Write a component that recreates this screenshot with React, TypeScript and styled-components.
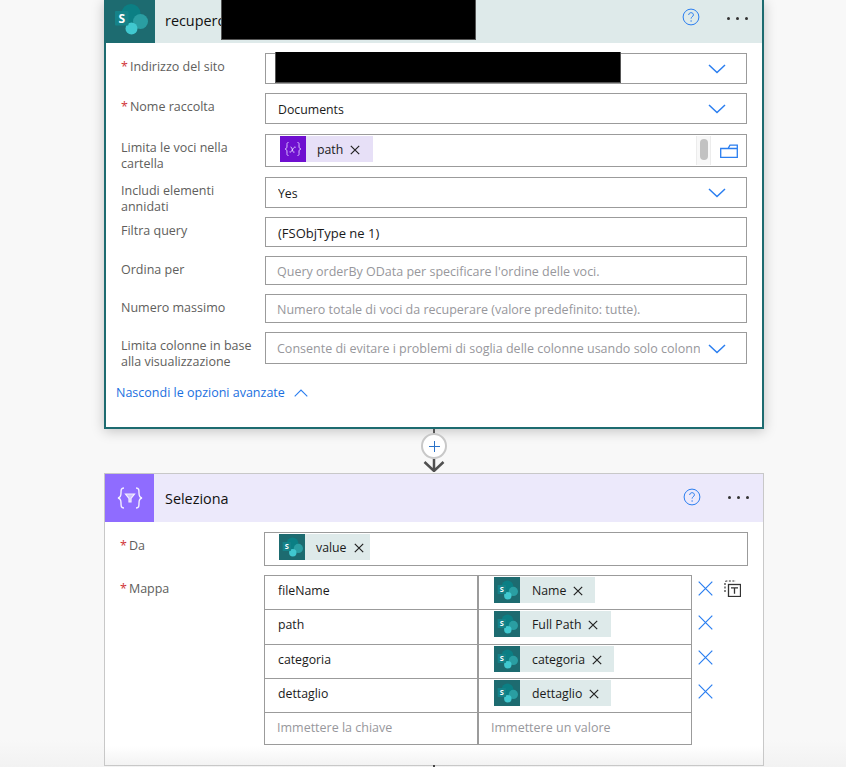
import React from "react";
import styled, { createGlobalStyle } from "styled-components";

const Global = createGlobalStyle`
  html, body { margin: 0; padding: 0; height: 100%; overflow: hidden; background: #f8f8f8; }
  #root { height: 767px; overflow: hidden; }
`;

const Page = styled.div`
  position: relative;
  width: 846px;
  height: 767px;
  overflow: hidden;
  padding-left: 104px;
  box-sizing: border-box;
  font-family: "Open Sans", "Noto Sans", sans-serif;
  font-size: 12px;
  color: #111;
  background: linear-gradient(#f8f8f8 0, #f8f8f8 740px, #f2f2f2 767px);
`;

const Card = styled.section<{ $selected?: boolean }>`
  width: 660px;
  box-sizing: border-box;
  background: #fff;
  border: ${p => (p.$selected ? "2px solid #1d6b70" : "1px solid #c8c8c8")};
  border-top: ${p => (p.$selected ? "none" : "1px solid #c8c8c8")};
  box-shadow: ${p => (p.$selected ? "0 2px 12px rgba(0,0,0,.22)" : "none")};
`;

const Header = styled.header<{ $bg: string; $h: number }>`
  display: flex;
  align-items: center;
  height: ${p => p.$h}px;
  background: ${p => p.$bg};
`;

const LogoBox = styled.div<{ $bg: string; $w: number; $lift?: number }>`
  width: ${p => p.$w}px;
  align-self: stretch;
  background: ${p => p.$bg};
  display: flex;
  align-items: center;
  justify-content: center;
  flex: none;
  box-sizing: border-box;
  padding-bottom: ${p => p.$lift ?? 0}px;
`;

const Title = styled.div<{ $left: number; $lift?: number }>`
  margin-left: ${p => p.$left}px;
  margin-bottom: ${p => p.$lift ?? 0}px;
  font-size: 14.4px;
  color: #111;
  flex: 1;
`;

const HelpIcon = styled.svg<{ $right: number; $lift: number }>`
  width: 18px;
  height: 18px;
  margin-right: ${p => p.$right}px;
  margin-bottom: ${p => p.$lift}px;
  flex: none;
`;

const Dots = styled.div<{ $right: number; $lift: number }>`
  display: flex;
  gap: 6px;
  margin-right: ${p => p.$right}px;
  margin-bottom: ${p => p.$lift}px;
`;

const Dot = styled.i`
  width: 3px;
  height: 3px;
  border-radius: 50%;
  background: #333;
`;

const Form = styled.div<{ $top: number; $bottom: number }>`
  display: flex;
  flex-direction: column;
  padding: ${p => p.$top}px 15px ${p => p.$bottom}px 15px;
`;

const FadingForm = styled(Form)`
  background: linear-gradient(#fff 0, #fff 224px, #f3f3f3 243px);
`;

const Row = styled.div<{ $gap: number }>`
  display: grid;
  grid-template-columns: 144px 1fr;
  margin-bottom: ${p => p.$gap}px;
`;

const Label = styled.label`
  padding-top: 6px;
  padding-right: 10px;
  font-size: 12.5px;
  line-height: 16px;
  color: #605e5c;
`;

const Req = styled.span`
  color: #d13438;
  margin-right: 2px;
`;

const Input = styled.div<{ $h: number; $pad?: number; $chip?: boolean }>`
  height: ${p => p.$h}px;
  box-sizing: border-box;
  border: 1px solid #9b9b9b;
  display: flex;
  align-items: center;
  padding-left: ${p => p.$pad ?? 12}px;
  padding-top: ${p => (p.$chip ? 0 : 1)}px;
  background: #fff;
  font-size: 12.3px;
  color: #1a1a1a;
  white-space: nowrap;
  overflow: hidden;
`;

const Value = styled.span<{ $size?: number }>`
  flex: 1;
  min-width: 0;
  overflow: hidden;
  font-size: ${p => p.$size ?? 12.3}px;
`;

const Placeholder = styled.span`
  flex: 1;
  min-width: 0;
  margin-left: -1px;
  overflow: hidden;
  font-size: 12.5px;
  color: #97979c;
`;

const Chevron = styled.svg`
  width: 18px;
  height: 10px;
  margin-right: 20px;
  margin-left: 8px;
  flex: none;
`;

const Chip = styled.span<{ $bg: string; $w: number }>`
  display: inline-flex;
  align-items: center;
  align-self: flex-start;
  margin-top: 1px;
  height: 26px;
  width: ${p => p.$w}px;
  flex: none;
  background: ${p => p.$bg};
  font-size: 12.3px;
  color: #1a1a1a;
`;

const ChipIcon = styled.span<{ $bg: string }>`
  width: 26px;
  height: 26px;
  background: ${p => p.$bg};
  display: flex;
  align-items: center;
  justify-content: center;
  flex: none;
`;

const ChipText = styled.span<{ $left: number }>`
  margin-left: ${p => p.$left}px;
`;

const ChipX = styled.svg`
  width: 10px;
  height: 10px;
  margin-left: 7px;
  margin-top: 2px;
  flex: none;
`;

const Spacer = styled.div`
  flex: 1;
`;

const ScrollTrack = styled.div`
  width: 15px;
  align-self: stretch;
  margin: 1px 0;
  border-left: 1px solid #ececec;
  border-right: 1px solid #ececec;
  background: #f8f8f8;
  display: flex;
  justify-content: center;
  padding-top: 3px;
  box-sizing: border-box;
  flex: none;
`;

const ScrollThumb = styled.div`
  width: 8px;
  height: 21px;
  border-radius: 4px;
  background: #c2c2c2;
`;

const FolderIcon = styled.svg`
  width: 18px;
  height: 14px;
  margin: 0 8px 0 9px;
  flex: none;
`;

const AdvLink = styled.a`
  display: flex;
  align-items: center;
  gap: 9px;
  margin: 15px 0 0 -5px;
  font-size: 12.5px;
  line-height: 16px;
  color: #1a6fe0;
`;

const Connector = styled.div`
  width: 660px;
  height: 44px;
  position: relative;
  display: flex;
  flex-direction: column;
  align-items: center;
`;

const Stem = styled.div`
  width: 2px;
  height: 5px;
  background: #555;
`;

const PlusCircle = styled.div`
  width: 26px;
  height: 26px;
  box-sizing: border-box;
  border: 2px solid #c8c8c8;
  border-radius: 50%;
  background: #fff;
  display: flex;
  align-items: center;
  justify-content: center;
  flex: none;
  margin-top: -1px;
`;

const ArrowIcon = styled.svg`
  width: 22px;
  height: 13px;
  flex: none;
`;

const MapWrap = styled.div`
  display: flex;
  align-items: flex-start;
`;

const MapTable = styled.div`
  width: 428px;
  border: 1px solid #9b9b9b;
  box-sizing: border-box;
  flex: none;
  background: #fff;
`;

const MapRow = styled.div<{ $h: number; $last?: boolean }>`
  display: grid;
  grid-template-columns: 214px 1fr;
  height: ${p => p.$h}px;
  box-sizing: border-box;
  border-bottom: ${p => (p.$last ? "none" : "1px solid #9b9b9b")};
`;

const KeyCell = styled.div<{ $ph?: boolean }>`
  display: flex;
  align-items: center;
  padding-left: ${p => (p.$ph ? 12 : 13)}px;
  padding-bottom: ${p => (p.$ph ? 3 : 5)}px;
  border-right: 2px solid #9b9b9b;
  font-size: ${p => (p.$ph ? 12.5 : 12.3)}px;
  color: ${p => (p.$ph ? "#97979c" : "#1a1a1a")};
`;

const ValCell = styled.div<{ $ph?: boolean }>`
  display: flex;
  align-items: center;
  padding-left: ${p => (p.$ph ? 12 : 15)}px;
  padding-bottom: ${p => (p.$ph ? 3 : 0)}px;
  font-size: 12.5px;
  color: #97979c;
`;

const SideIcons = styled.div`
  display: flex;
  flex-direction: column;
  margin-left: 6px;
  width: 50px;
`;

const SideRow = styled.div<{ $h: number }>`
  height: ${p => p.$h}px;
  display: flex;
  align-items: flex-start;
  padding-top: 6px;
  box-sizing: border-box;
  gap: 12px;
`;

const TextModeIcon = styled.svg`
  width: 17px;
  height: 17px;
  margin-top: -1px;
  margin-left: -1px;
  flex: none;
`;

const Redaction = styled.div<{ $x: number; $y: number; $w: number; $h: number }>`
  position: absolute;
  left: ${p => p.$x}px;
  top: ${p => p.$y}px;
  width: ${p => p.$w}px;
  height: ${p => p.$h}px;
  background: #000;
  border: 1px solid #555;
  border-width: 0 1px 1px 1px;
  box-sizing: border-box;
`;

const BottomTick = styled.div`
  position: absolute;
  left: 433px;
  top: 765px;
  width: 2px;
  height: 2px;
  background: #444;
`;

const BLUE = "#2a7ef0";
const TEAL = "#1d6b70";
const TEAL_BG = "#deeaea";
const PURPLE_BG = "#ece9fb";
const PURPLE = "#8f6cff";
const VAR_BG = "#e7e0f7";
const VAR_PURPLE = "#6f0fd0";

const SharePoint: React.FC<{ size: number }> = ({ size }) => (
  <svg width={size} height={(size * 32) / 34} viewBox="0 0 34 32">
    <circle cx="17" cy="10.5" r="9.5" fill="#0b7f84" />
    <circle cx="26.500" cy="18.500" r="7.500" fill="#2a9ea2" />
    <circle cx="17.500" cy="25.500" r="6" fill="#40c8cf" />
    <rect x="1" y="8" width="13.500" height="14.500" rx="1" fill="#158389" />
    <text x="7.700" y="19.800" textAnchor="middle" fontFamily="Open Sans, sans-serif" fontWeight="700" fontSize="12" fill="#fff">S</text>
  </svg>
);

const Help = ({ right, lift }: { right: number; lift: number }) => (
  <HelpIcon $right={right} $lift={lift} viewBox="0 0 18 18">
    <circle cx="9" cy="9" r="7.9" fill="none" stroke={BLUE} strokeWidth="1" />
    <path d="M6.700 7c0-1.400 1-2.300 2.400-2.300s2.300.9 2.300 2.100c0 1-.6 1.500-1.200 2-.7.5-1.100.9-1.100 1.800" fill="none" stroke={BLUE} strokeWidth="1" />
    <circle cx="9.100" cy="13" r=".7" fill={BLUE} />
  </HelpIcon>
);

const Down = () => (
  <Chevron viewBox="0 0 18 10">
    <path d="M1 1l8 7.500L17 1" fill="none" stroke={BLUE} strokeWidth="1.500" />
  </Chevron>
);

const CloseSmall = () => (
  <ChipX viewBox="0 0 10 10">
    <path d="M.8.8l8.400 8.400M9.200.8L.8 9.200" stroke="#222" strokeWidth="1.200" fill="none" />
  </ChipX>
);

const SpChip = ({ text, w, left }: { text: string; w: number; left: number }) => (
  <Chip $bg={TEAL_BG} $w={w}>
    <ChipIcon $bg={TEAL}><SharePoint size={21} /></ChipIcon>
    <ChipText $left={left}>{text}</ChipText>
    <CloseSmall />
  </Chip>
);

const BigX = () => (
  <svg width="15" height="15" viewBox="0 0 15 15">
    <path d="M.7.7l13.600 13.600M14.300.7L.7 14.300" stroke={BLUE} strokeWidth="1.200" fill="none" />
  </svg>
);

const TextMode = () => (
  <TextModeIcon viewBox="0 0 17 17" fill="none">
    <path d="M1 12V2.500A1.500 1.500 0 0 1 2.500 1H12" stroke="#333" strokeWidth="1.200" strokeDasharray="2 1.500" />
    <rect x="4.500" y="4.500" width="12" height="12" fill="#fff" stroke="#333" strokeWidth="1.300" />
    <path d="M7 7.800h7M10.500 7.800v6" stroke="#333" strokeWidth="1.300" />
  </TextModeIcon>
);

const rows = [
  { k: "fileName", v: "Name", w: 101, h: 34 },
  { k: "path", v: "Full Path", w: 117, h: 35 },
  { k: "categoria", v: "categoria", w: 120, h: 34 },
  { k: "dettaglio", v: "dettaglio", w: 117, h: 34 },
];

export default function App() {
  return (
    <Page>
      <Global />
      <Card $selected>
        <Header $bg={TEAL_BG} $h={43}>
          <LogoBox $bg={TEAL} $w={49} $lift={6}><SharePoint size={34} /></LogoBox>
          <Title $left={10} $lift={3}>recupero</Title>
          <Help right={27} lift={9} />
          <Dots $right={14} $lift={7}><Dot /><Dot /><Dot /></Dots>
        </Header>
        <Form $top={10} $bottom={26}>
          <Row $gap={9}>
            <Label><Req>*</Req>Indirizzo del sito</Label>
            <Input $h={31}><Value>C</Value><Down /></Input>
          </Row>
          <Row $gap={10}>
            <Label><Req>*</Req>Nome raccolta</Label>
            <Input $h={31}><Value>Documents</Value><Down /></Input>
          </Row>
          <Row $gap={5}>
            <Label>Limita le voci nella cartella</Label>
            <Input $h={33} $pad={14} $chip>
              <Chip $bg={VAR_BG} $w={93}>
                <ChipIcon $bg={VAR_PURPLE}>
                  <svg width="20" height="16" viewBox="0 0 20 16" fill="none">
                    <path d="M5.500 1.500C3.500 1.500 4 3 4 5 4 7 3.500 7.700 2 8c1.500.3 2 1 2 3 0 2-.5 3.500 1.500 3.500M14.500 1.500c2 0 1.500 1.500 1.500 3.500 0 2 .5 2.700 2 3-1.500.3-2 1-2 3 0 2 .5 3.500-1.500 3.500" stroke="#d8c0ff" strokeWidth="1" />
                    <path d="M7.500 6c1 0 1.200.6 1.600 2l.8 2.300c.3 1 .8 1.200 1.600.8M12.700 6.300c-1-.6-1.600 0-2.300 1l-2 3c-.6.9-1.200 1-1.900.6" stroke="#e8dcff" strokeWidth=".9" />
                  </svg>
                </ChipIcon>
                <ChipText $left={11}>path</ChipText>
                <CloseSmall />
              </Chip>
              <Spacer />
              <ScrollTrack><ScrollThumb /></ScrollTrack>
              <FolderIcon viewBox="0 0 18 14" fill="none">
                <path d="M.7 4.500h16.600v8.800H.7zM.7 4.500h7.300l2-3.300h7.300v3.300" stroke={BLUE} strokeWidth="1.300" />
              </FolderIcon>
            </Input>
          </Row>
          <Row $gap={2}>
            <Label>Includi elementi annidati</Label>
            <Input $h={31}><Value>Yes</Value><Down /></Input>
          </Row>
          <Row $gap={9}>
            <Label>Filtra query</Label>
            <Input $h={30}><Value $size={13}>(FSObjType ne 1)</Value></Input>
          </Row>
          <Row $gap={9}>
            <Label>Ordina per</Label>
            <Input $h={29}><Placeholder>Query orderBy OData per specificare l'ordine delle voci.</Placeholder></Input>
          </Row>
          <Row $gap={9}>
            <Label>Numero massimo</Label>
            <Input $h={29}><Placeholder>Numero totale di voci da recuperare (valore predefinito: tutte).</Placeholder></Input>
          </Row>
          <Row $gap={0}>
            <Label>Limita colonne in base alla visualizzazione</Label>
            <Input $h={32}><Placeholder>Consente di evitare i problemi di soglia delle colonne usando solo colonn</Placeholder><Down /></Input>
          </Row>
          <AdvLink>
            Nascondi le opzioni avanzate
            <svg width="14" height="8" viewBox="0 0 14 8"><path d="M.7 7.300L7 1l6.300 6.300" fill="none" stroke={BLUE} strokeWidth="1.100" /></svg>
          </AdvLink>
        </Form>
      </Card>
      <Connector>
        <Stem />
        <PlusCircle>
          <svg width="11" height="11" viewBox="0 0 11 11"><path d="M5.500 0v11M0 5.500h11" stroke="#2a72c8" strokeWidth="1" /></svg>
        </PlusCircle>
        <ArrowIcon viewBox="0 0 22 13" fill="none">
          <path d="M11 0v12M1.500 3L11 12l9.500-9" stroke="#505050" strokeWidth="2.500" />
        </ArrowIcon>
      </Connector>
      <Card>
        <Header $bg={PURPLE_BG} $h={48}>
          <LogoBox $bg={PURPLE} $w={49}>
            <svg width="26" height="22" viewBox="0 0 26 22" fill="none">
              <path d="M7 1C4 1 4 3 4 6c0 3-.5 4.500-3 5 2.500.5 3 2 3 5 0 3 0 5 3 5M19 1c3 0 3 2 3 5 0 3 .5 4.500 3 5-2.500.5-3 2-3 5 0 3 0 5-3 5" stroke="#f4f0ff" strokeWidth="1.400" />
              <path d="M8.500 7h9l-3.500 4.500v3.500h-2v-3.500z" stroke="#f4f0ff" strokeWidth="1.200" fill="#cfc2ff" />
            </svg>
          </LogoBox>
          <Title $left={11}>Seleziona</Title>
          <Help right={27} lift={2} />
          <Dots $right={14} $lift={2}><Dot /><Dot /><Dot /></Dots>
        </Header>
        <FadingForm $top={10} $bottom={20}>
          <Row $gap={9}>
            <Label><Req>*</Req>Da</Label>
            <Input $h={34} $pad={14} $chip>
              <SpChip text="value" w={91} left={11} />
            </Input>
          </Row>
          <Row $gap={0}>
            <Label><Req>*</Req>Mappa</Label>
            <MapWrap>
              <MapTable>
                {rows.map(r => (
                  <MapRow key={r.k} $h={r.h}>
                    <KeyCell>{r.k}</KeyCell>
                    <ValCell><SpChip text={r.v} w={r.w} left={12} /></ValCell>
                  </MapRow>
                ))}
                <MapRow $h={31} $last>
                  <KeyCell $ph>Immettere la chiave</KeyCell>
                  <ValCell $ph>Immettere un valore</ValCell>
                </MapRow>
              </MapTable>
              <SideIcons>
                {rows.map((r, i) => (
                  <SideRow key={r.k} $h={r.h}>
                    <BigX />
                    {i === 0 && <TextMode />}
                  </SideRow>
                ))}
              </SideIcons>
            </MapWrap>
          </Row>
        </FadingForm>
      </Card>
      <Redaction $x={221} $y={0} $w={255} $h={40} />
      <Redaction $x={275} $y={52} $w={346} $h={31} />
      <BottomTick />
    </Page>
  );
}
